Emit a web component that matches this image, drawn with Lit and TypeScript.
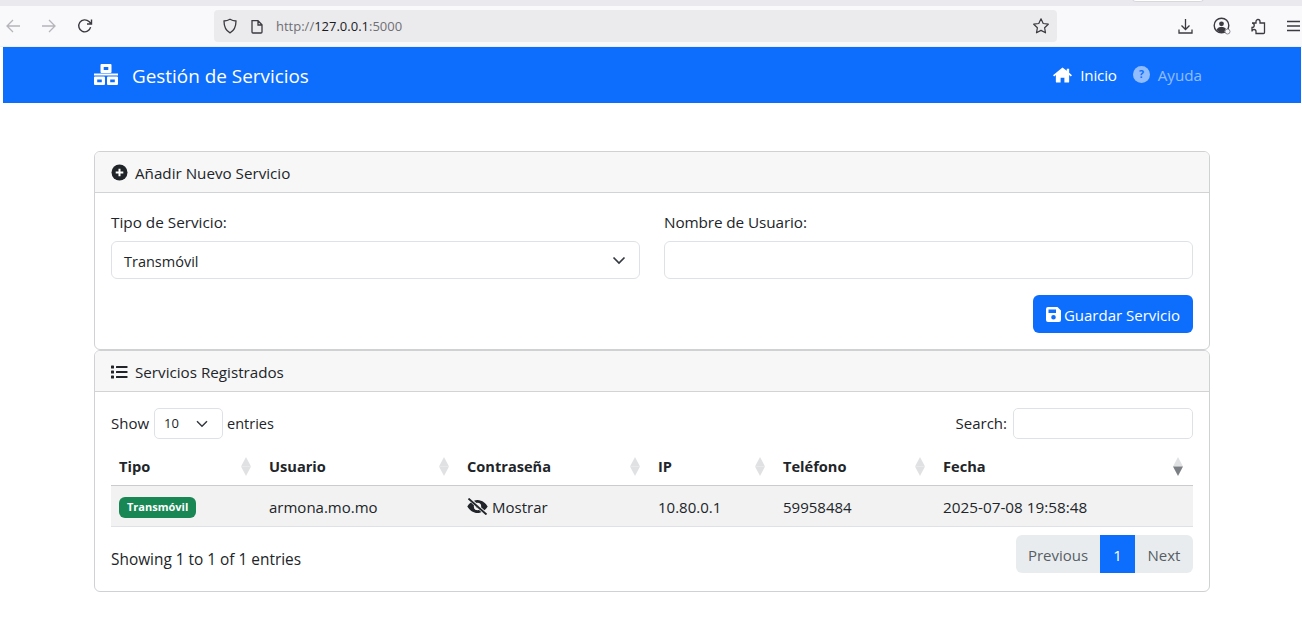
import { LitElement, html, css, svg } from "lit";
import { customElement } from "lit/decorators.js";

const ic = (w: number, h: number, vb: string, body: unknown, cls = "") =>
  html`<svg class=${cls} width=${w} height=${h} viewBox=${vb} aria-hidden="true">${body}</svg>`;

@customElement("app-root")
export class AppRoot extends LitElement {
  static styles = css`
    :host { display: block; width: 1302px; height: 626px; overflow: hidden; background: #fff; color: #212529;
      font-family: "Open Sans", "Noto Sans", sans-serif; font-size: 15px; line-height: 1.5; }
    * { box-sizing: border-box; }
    svg { display: block; flex: none; }
    .tabstrip { height: 6px; background: #e9e9ee; position: relative; }
    .tab { position: absolute; left: 1132px; top: -4px; width: 72px; height: 6px; background: #fff; border-radius: 0 0 4px 4px; border: 1px solid #d8d8dc; border-top: 0; }
    .toolbar { height: 41px; background: #f9f9fb; display: flex; align-items: center; border-bottom: 1px solid #eeeef0; padding-left: 5px; }
    .nav-btns { display: flex; align-items: center; gap: 20px; width: 209px; }
    .urlbar { width: 843px; height: 32px; background: #ebebed; border-radius: 4px; display: flex; align-items: center; padding: 0 7px 0 8px; font-size: 13px; color: #6f6f75; }
    .urlbar .addr { margin-left: 12px; flex: 1; padding-top: 1px; }
    .urlbar b { font-weight: 400; color: #1b1b1f; }
    .urlbar .doc { margin-left: 12px; }
    .tools { display: flex; align-items: center; margin-left: 120px; gap: 19px; }
    .page { padding-left: 3px; padding-right: 1px; }
    .navbar { height: 56px; background: #0d6efd; color: #fff; display: flex; align-items: center; padding: 0 99px 0 91px; }
    .brand { display: flex; align-items: center; gap: 14px; font-size: 18.9px; flex: 1; }
    .txt { padding-top: 2px; }
    .navlinks { display: flex; align-items: center; gap: 16px; font-size: 15.2px; }
    .navlink { display: flex; align-items: center; gap: 8px; }
    .navlink span { padding-top: 1px; }
    .inicio { letter-spacing: -.2px; }
    .muted { color: rgba(255,255,255,.55); }
    .container { width: 1116px; margin: 48px 0 0 91px; }
    .card { border: 1px solid #cfd1d3; border-radius: 6px; background: #fff; overflow: hidden; }
    .card-h { height: 41px; background: #f7f7f7; border-bottom: 1px solid #d2d3d5; display: flex; align-items: center; padding: 0 16px; gap: 7px; font-size: 15.2px; }
    .card-h svg { margin-top: 1px; }
    .c1 { height: 199px; }
    .c2 { height: 242px; }
    .body { padding: 0 16px; }
    .form { display: grid; grid-template-columns: 529px 529px; gap: 0 24px; padding-top: 17px; }
    label { display: block; height: 31px; font-size: 15.3px; line-height: 24px; }
    .tight { letter-spacing: -.1px; }
    .field { height: 38px; border: 1px solid #dee2e6; border-radius: 6px; background: #fff; display: flex; align-items: center; justify-content: space-between; padding: 0 13px 0 12px; font-size: 14.5px; }
    .field .txt { padding-top: 3px; }
    .actions { display: flex; justify-content: flex-end; margin-top: 16px; }
    .btn { width: 160px; height: 38px; background: #0d6efd; color: #fff; border-radius: 6px; display: flex; align-items: center; justify-content: center; gap: 3px; font-size: 15px; }
    .dt-top { display: flex; justify-content: space-between; align-items: center; padding-top: 16px; height: 47px; font-size: 15px; }
    .inline { display: flex; align-items: center; gap: 5px; }
    .ent { font-size: 14.5px; margin-left: -1px; }
    .len { width: 69px; height: 31px; border: 1px solid #dee2e6; border-radius: 5px; display: flex; align-items: center; justify-content: space-between; padding: 0 14px 0 9px; font-size: 13px; }
    .search { width: 180px; height: 31px; border: 1px solid #dee2e6; border-radius: 5px; margin-left: 1px; }
    table { table-layout: fixed; width: 1082px; border-collapse: collapse; margin-top: 8px; font-size: 15px; }
    th { position: relative; text-align: left; height: 38px; padding: 2px 8px 0; font-weight: 700; font-size: 14.6px; border-bottom: 1px solid #c9cbce; }
    td { height: 41px; padding: 3px 8px 0; background: #f2f2f2; border-bottom: 1px solid #dee2e6; }
    .date { font-size: 15.3px; }
    .sort { position: absolute; right: 10px; top: 10px; }
    .badge { display: inline-flex; align-items: center; height: 21px; padding: 0 8px; border-radius: 6px; background: #198754; color: #fff; font-size: 11px; font-weight: 700; margin-top: -3px; vertical-align: middle; }
    .pw { display: flex; align-items: center; gap: 4px; }
    .pw svg { margin-top: -2px; }
    .dt-bot { display: flex; justify-content: space-between; padding-top: 8px; }
    .info { padding-top: 13px; font-size: 15.4px; }
    .pager { display: flex; height: 38px; font-size: 15px; color: #565e64; border-radius: 6px; overflow: hidden; background: #e9ecef; }
    .pager span { display: flex; align-items: center; justify-content: center; padding-top: 3px; }
    .p { width: 84px; } .pager .cur { width: 35px; background: #0d6efd; color: #fff; } .n { width: 58px; }
  `;

  private sortIcon(active = false) {
    return ic(10, 19, "0 0 10 19", svg`
      <path d="M5 0 10 9.500H0z" fill="#e0e1e3"/>
      <path d="M5 19 10 9.500H0z" fill=${active ? "#7b7e82" : "#e0e1e3"}/>`, "sort");
  }

  render() {
    const s = "none";
    return html`
      <div class="tabstrip"><div class="tab"></div></div>
      <div class="toolbar">
        <div class="nav-btns">
          ${ic(16, 16, "0 0 16 16", svg`<path d="M15 8H2M8 2 2 8l6 6" fill=${s} stroke="#b5b5ba" stroke-width="1.3"/>`)}
          ${ic(16, 16, "0 0 16 16", svg`<path d="M1 8h13M8 2l6 6-6 6" fill=${s} stroke="#b5b5ba" stroke-width="1.3"/>`)}
          ${ic(16, 16, "0 0 16 16", svg`<path d="M13.6 9.2A6 6 0 1 1 12 3.6L14.5 6M14.5 1.5V6H10" fill=${s} stroke="#3a3a40" stroke-width="1.4"/>`)}
        </div>
        <div class="urlbar">
          ${ic(16, 16, "0 0 16 16", svg`<path d="M8 1.2c2 1.200 4 1.700 6 1.800 0 5-1.500 9.500-6 11.800C3.500 12.500 2 8 2 3c2-.1 4-.6 6-1.800z" fill=${s} stroke="#3a3a40" stroke-width="1.300"/>`)}
          <span class="doc">${ic(14, 15, "0 0 14 15", svg`<path d="M2 1.700h6l4 4V13a1 1 0 0 1-1 1H3a1 1 0 0 1-1-1V1.700zM8 1.700V6h4" fill=${s} stroke="#3a3a40" stroke-width="1.300"/>`)}</span>
          <span class="addr">http://<b>127.0.0.1</b>:5000</span>
          ${ic(18, 18, "0 0 18 18", svg`<path d="m9 1.800 2.200 4.700 5.100.7-3.700 3.500.9 5.100L9 13.400l-4.500 2.400.9-5.100-3.700-3.500 5.100-.7z" fill=${s} stroke="#3a3a40" stroke-width="1.200" stroke-linejoin="round"/>`)}
        </div>
        <div class="tools">
          ${ic(17, 17, "0 0 17 17", svg`<path d="M8.500 1v10M4.500 7.500l4 4 4-4M2 11.500V15h13v-3.500" fill=${s} stroke="#3a3a40" stroke-width="1.300"/>`)}
          ${ic(18, 18, "0 0 18 18", svg`<circle cx="8.500" cy="8.500" r="7.300" fill=${s} stroke="#3a3a40" stroke-width="1.400"/><circle cx="8.500" cy="6.800" r="2.400" fill="#3a3a40"/><path d="M3.500 13c1-2.500 3-3 5-3s3.500.5 4.500 2l-2 3H6z" fill="#3a3a40"/><circle cx="14.500" cy="14.500" r="2.500" fill="#f9f9fb" stroke="#8a8a90"/>`)}
          ${ic(17, 17, "0 0 17 17", svg`<path d="M2 5h4V3.500a2 2 0 0 1 4 0V5h4.500v9.500a1 1 0 0 1-1 1H6v-2a2 2 0 0 0-4 0V9.500a2 2 0 0 0 0-4.500z" fill=${s} stroke="#3a3a40" stroke-width="1.300"/>`)}
          ${ic(14, 12, "0 0 14 12", svg`<path d="M1 1.500h13M1 6h13M1 10.500h13" stroke="#3a3a40" stroke-width="1.300"/>`)}
        </div>
      </div>
      <div class="page">
        <div class="navbar">
          <div class="brand">
            ${ic(24, 21, "0 0 24 21", svg`<g fill="#fff" fill-rule="evenodd"><path d="M7.500 0h9a1 1 0 0 1 1 1v7a1 1 0 0 1-1 1h-9a1 1 0 0 1-1-1V1a1 1 0 0 1 1-1zm2.200 3v3h4.600V3z"/><path d="M1 12.500h9a1 1 0 0 1 1 1V20a1 1 0 0 1-1 1H1a1 1 0 0 1-1-1v-6.500a1 1 0 0 1 1-1zm2.200 3v2.800h4.600v-2.800z"/><path d="M14 12.500h9a1 1 0 0 1 1 1V20a1 1 0 0 1-1 1h-9a1 1 0 0 1-1-1v-6.500a1 1 0 0 1 1-1zm2.200 3v2.800h4.600v-2.800z"/><path d="M0 9.500h24v2H0z"/></g>`)}
            <span class="txt">Gestión de Servicios</span>
          </div>
          <div class="navlinks">
            <div class="navlink">
              ${ic(19, 16, "0 0 20 16", svg`<path fill="#fff" d="M10 0 0 8.200l1.200 1.400L3 8.100V15a1 1 0 0 0 1 1h4v-5h4v5h4a1 1 0 0 0 1-1V8.100l1.800 1.500L20 8.200l-3-2.500V1.500h-2.500v2.100z"/>`)}
              <span class="inicio">Inicio</span>
            </div>
            <div class="navlink muted">
              ${ic(17, 17, "0 0 17 17", svg`<circle cx="8.500" cy="8.500" r="8.500" fill="#fff" fill-opacity=".55"/><text x="8.500" y="12.300" text-anchor="middle" font-size="10.500" font-weight="700" font-family="Open Sans" fill="#0d6efd">?</text>`)}
              <span>Ayuda</span>
            </div>
          </div>
        </div>
        <div class="container">
          <section class="card c1">
            <div class="card-h">
              ${ic(17, 17, "0 0 17 17", svg`<circle cx="8.500" cy="8.500" r="8" fill="#212529"/><path d="M8.500 4.700v7.600M4.700 8.500h7.600" stroke="#fff" stroke-width="2"/>`)}
              <span class="txt">Añadir Nuevo Servicio</span>
            </div>
            <div class="body">
              <div class="form">
                <div>
                  <label>Tipo de Servicio:</label>
                  <div class="field"><span class="txt">Transmóvil</span>
                    ${ic(14, 9, "0 0 14 9", svg`<path d="m1.500 1.500 5.500 5.500 5.500-5.500" fill=${s} stroke="#343a40" stroke-width="1.700"/>`)}
                  </div>
                </div>
                <div>
                  <label class="tight">Nombre de Usuario:</label>
                  <div class="field"></div>
                </div>
              </div>
              <div class="actions">
                <div class="btn">
                  ${ic(15, 15, "0 0 15 15", svg`<path fill="#fff" fill-rule="evenodd" d="M2 0h9.500L15 3.500V13a2 2 0 0 1-2 2H2a2 2 0 0 1-2-2V2a2 2 0 0 1 2-2zm.5 2.500V6h7.500V2.500zM7.500 8a2.300 2.300 0 1 0 0 4.600 2.300 2.300 0 0 0 0-4.600z"/>`)}
                  <span class="txt">Guardar Servicio</span>
                </div>
              </div>
            </div>
          </section>
          <section class="card c2">
            <div class="card-h">
              ${ic(17, 14, "0 0 17 14", svg`<g fill="#212529"><rect y=".5" width="3" height="3" rx=".6"/><rect y="5.500" width="3" height="3" rx=".6"/><rect y="10.500" width="3" height="3" rx=".6"/><rect x="5" y="1" width="11.500" height="2" rx=".5"/><rect x="5" y="6" width="11.500" height="2" rx=".5"/><rect x="5" y="11" width="11.500" height="2" rx=".5"/></g>`)}
              <span class="txt">Servicios Registrados</span>
            </div>
            <div class="body">
              <div class="dt-top">
                <div class="inline">Show
                  <div class="len"><span>10</span>
                    ${ic(12, 8, "0 0 12 8", svg`<path d="m1 1.200 5 5 5-5" fill=${s} stroke="#343a40" stroke-width="1.500"/>`)}
                  </div><span class="ent">entries</span></div>
                <div class="inline">Search: <div class="search"></div></div>
              </div>
              <table>
                <colgroup><col style="width:150px"><col style="width:198px"><col style="width:191px"><col style="width:125px"><col style="width:160px"><col style="width:258px"></colgroup>
                <thead><tr>
                  <th>Tipo${this.sortIcon()}</th><th>Usuario${this.sortIcon()}</th><th>Contraseña${this.sortIcon()}</th>
                  <th>IP${this.sortIcon()}</th><th>Teléfono${this.sortIcon()}</th><th>Fecha${this.sortIcon(true)}</th>
                </tr></thead>
                <tbody><tr>
                  <td><span class="badge">Transmóvil</span></td>
                  <td>armona.mo.mo</td>
                  <td><div class="pw">
                    ${ic(21, 17, "0 0 21 17", svg`<path fill="#212529" fill-rule="evenodd" d="M10.500 2C5.500 2 2 5.800.3 8.500 2 11.200 5.500 15 10.500 15s8.500-3.800 10.200-6.500C19 5.800 15.500 2 10.500 2zm0 2.800a3.700 3.700 0 1 1 0 7.400 3.700 3.700 0 0 1 0-7.400z"/><circle cx="10.500" cy="8.500" r="1.800" fill="#212529"/><path d="M2 .5 19 16" stroke="#f2f2f2" stroke-width="3.400"/><path d="M1.500 .6 19.500 16.500" stroke="#212529" stroke-width="1.900"/>`)}
                    <span>Mostrar</span></div></td>
                  <td>10.80.0.1</td><td>59958484</td><td class="date">2025-07-08 19:58:48</td>
                </tr></tbody>
              </table>
              <div class="dt-bot">
                <div class="info">Showing 1 to 1 of 1 entries</div>
                <div class="pager"><span class="p">Previous</span><span class="cur">1</span><span class="n">Next</span></div>
              </div>
            </div>
          </section>
        </div>
      </div>`;
  }
}
